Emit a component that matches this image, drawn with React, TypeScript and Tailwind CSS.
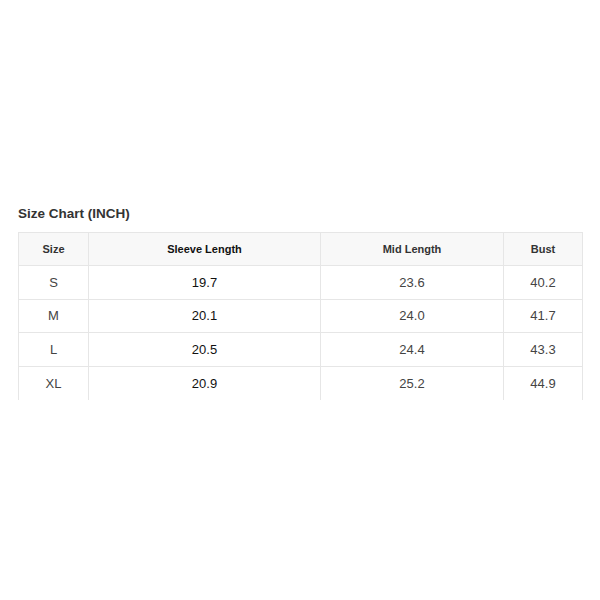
import React from "react";

const rows = [
  ["S", "19.7", "23.6", "40.2"],
  ["M", "20.1", "24.0", "41.7"],
  ["L", "20.5", "24.4", "43.3"],
  ["XL", "20.9", "25.2", "44.9"],
];

export default function App() {
  return (
    <div className="w-[600px] h-[600px] bg-white pt-[205px] px-[18px]" style={{ fontFamily: '"Liberation Sans", Arial, sans-serif' }}>
      <div className="text-[13.5px] leading-[17px] font-bold text-[#333]">Size Chart (INCH)</div>
      <div className="mt-[10px] w-[565px] border-t border-l border-r border-[#e6e6e6]">
        <div className="grid grid-cols-[70px_232px_183px_1fr] bg-[#f8f8f8] h-[33px] border-b border-[#e6e6e6] text-[11px] font-bold text-[#333]">
          <div className="flex items-center justify-center border-r border-[#e6e6e6]">Size</div>
          <div className="flex items-center justify-center border-r border-[#e6e6e6] text-[#111]">Sleeve Length</div>
          <div className="flex items-center justify-center border-r border-[#e6e6e6]">Mid Length</div>
          <div className="flex items-center justify-center">Bust</div>
        </div>
        {rows.map((r, i) => (
          <div
            key={r[0]}
            className={`grid grid-cols-[70px_232px_183px_1fr] h-[33.5px] text-[13px] text-[#444] ${i < rows.length - 1 ? "border-b border-[#e6e6e6]" : ""}`}
          >
            <div className="flex items-center justify-center border-r border-[#e6e6e6]">{r[0]}</div>
            <div className="flex items-center justify-center border-r border-[#e6e6e6] text-[#111]">{r[1]}</div>
            <div className="flex items-center justify-center border-r border-[#e6e6e6]">{r[2]}</div>
            <div className="flex items-center justify-center">{r[3]}</div>
          </div>
        ))}
      </div>
    </div>
  );
}
